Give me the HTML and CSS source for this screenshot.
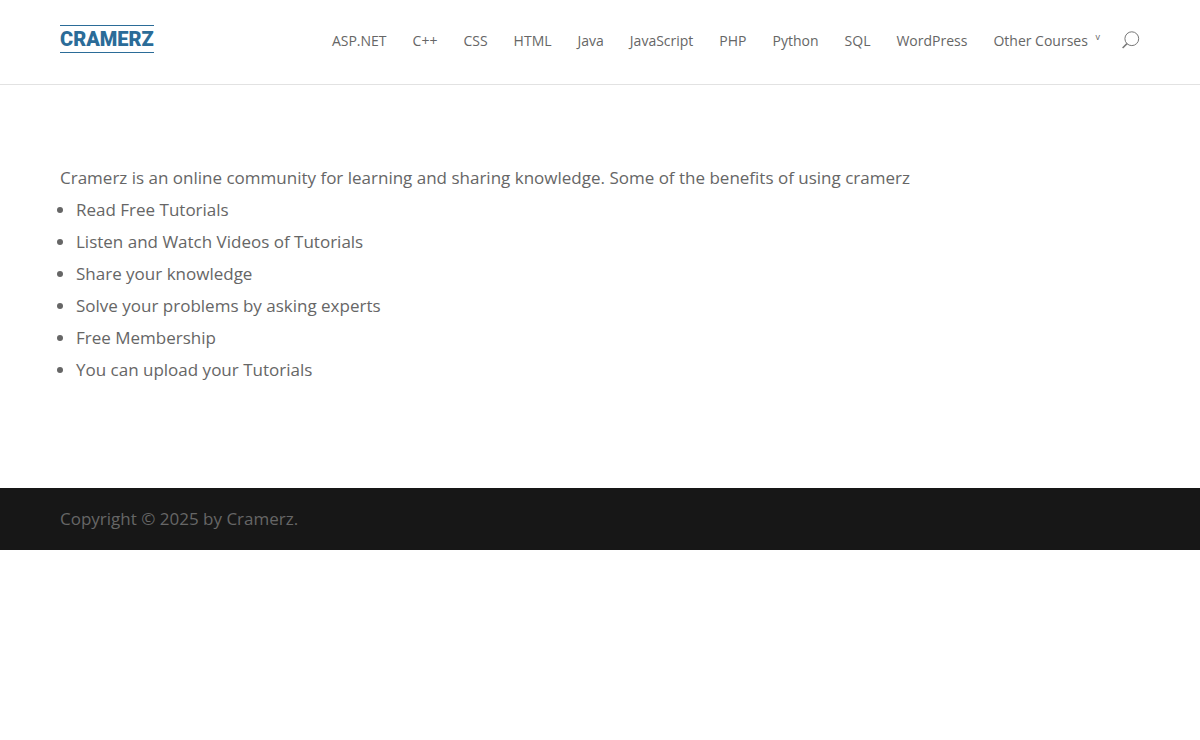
FILE: index.html
```
<!DOCTYPE html>
<html lang="en">
<head>
  <meta charset="UTF-8" />
  <meta name="viewport" content="width=device-width, initial-scale=1" />
  <title>Cramerz</title>
  <link rel="stylesheet" href="styles.css">
</head>
<body>
  <header class="main-header">
    <div class="container header-inner">
      <a class="logo" href="#">CRAMERZ</a>

      <div class="navigation">
        <nav>
          <ul class="menu">
            <li><a href="#">ASP.NET</a></li>
            <li><a href="#">C++</a></li>
            <li><a href="#">CSS</a></li>
            <li><a href="#">HTML</a></li>
            <li><a href="#">Java</a></li>
            <li><a href="#">JavaScript</a></li>
            <li><a href="#">PHP</a></li>
            <li><a href="#">Python</a></li>
            <li><a href="#">SQL</a></li>
            <li><a href="#">WordPress</a></li>
            <li><a class="has-children" href="#">Other Courses <span class="arrow">v</span></a></li>
          </ul>
        </nav>
        <button class="search" type="button" aria-label="Search">
          <svg width="18" height="18" viewBox="0 0 18 18" fill="none" stroke="currentColor">
            <circle cx="9.8" cy="7.7" r="6.9" stroke-width="1" />
            <path d="M5 12.6L.6 17" stroke-width="1.5" />
          </svg>
        </button>
      </div>
    </div>
  </header>

  <main class="container content">
    <p>Cramerz is an online community for learning and sharing knowledge. Some of the benefits of using cramerz</p>
    <ul class="benefits">
      <li>Read Free Tutorials</li>
      <li>Listen and Watch Videos of Tutorials</li>
      <li>Share your knowledge</li>
      <li>Solve your problems by asking experts</li>
      <li>Free Membership</li>
      <li>You can upload your Tutorials</li>
    </ul>
  </main>

  <footer class="main-footer">
    <div class="container">Copyright © 2025 by Cramerz.</div>
  </footer>
</body>
</html>
```

FILE: styles.css
```
body {
  margin: 0;
  font-family: "Open Sans", Arial, sans-serif;
  font-size: 17px;
  line-height: 32px;
  color: #666;
  background: #fff;
}

p,
ul {
  margin: 0;
  padding: 0;
}

a {
  color: inherit;
  text-decoration: none;
}

.container {
  width: 90%;
  max-width: 1080px;
  margin: 0 auto;
}

.main-header {
  border-bottom: 1px solid #e2e2e2;
}

.header-inner {
  display: flex;
  justify-content: space-between;
  align-items: flex-start;
  padding: 25px 0 27px;
}

.logo {
  border-top: 1px solid #2b6c98;
  border-bottom: 1px solid #2b6c98;
  font-family: Roboto, sans-serif;
  font-size: 20px;
  font-weight: 900;
  line-height: 26px;
  color: #2b6c98;
}

.navigation {
  display: flex;
  align-items: flex-start;
  gap: 22px;
}

.menu {
  display: flex;
  gap: 26px;
  list-style: none;
  font-size: 14px;
}

.menu a {
  display: block;
}

.has-children {
  white-space: nowrap;
}

.arrow {
  margin-left: 4px;
  font-size: 9px;
  vertical-align: 6px;
  line-height: 1;
}

.search {
  display: flex;
  margin: 6px 0 0;
  padding: 0;
  border: none;
  background: none;
  color: #777;
  cursor: pointer;
}

.content {
  padding: 77px 0 102px;
}

.benefits {
  padding-left: 16px;
}

.main-footer {
  padding: 15px 0;
  background: #171717;
}
```
